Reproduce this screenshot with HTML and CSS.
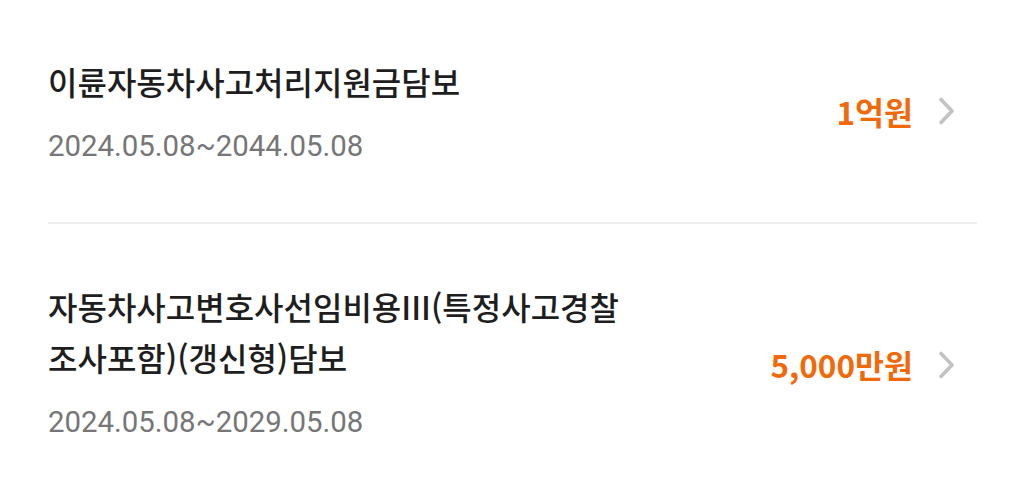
FILE: index.html
```html
<!DOCTYPE html>
<html lang="ko">
<head>
<meta charset="utf-8">
<link rel="stylesheet" href="styles.css">
</head>
<body>
<ul class="list">
  <li class="item">
    <div class="info">
      <div class="title">이륜자동차사고처리지원금담보</div>
      <div class="date">2024.05.08~2044.05.08</div>
    </div>
    <div class="amount">1억원</div>
    <svg class="chev" viewBox="0 0 24 30" width="24" height="30"><path d="M5 3.5 L16 15 L5 26.5" fill="none" stroke="#c2c2c2" stroke-width="3.6" stroke-linecap="round" stroke-linejoin="round"/></svg>
  </li>
  <li class="item">
    <div class="info">
      <div class="title">자동차사고변호사선임비용III(특정사고경찰조사포함)(갱신형)담보</div>
      <div class="date">2024.05.08~2029.05.08</div>
    </div>
    <div class="amount amount-low">5,000만원</div>
    <svg class="chev chev-low" viewBox="0 0 24 30" width="24" height="30"><path d="M5 3.5 L16 15 L5 26.5" fill="none" stroke="#c2c2c2" stroke-width="3.6" stroke-linecap="round" stroke-linejoin="round"/></svg>
  </li>
</ul>
</body>
</html>
```

FILE: styles.css
```css
html, body {
  margin: 0;
  padding: 0;
  background: #ffffff;
}
body {
  font-family: "Noto Sans CJK KR", sans-serif;
  color: #222222;
}
.list {
  list-style: none;
  margin: 0;
  padding: 0 48px;
}
.item {
  display: flex;
  align-items: center;
  padding: 56px 0;
  border-bottom: 2px solid #eeeeee;
}
.item:last-child {
  border-bottom: none;
  padding-top: 57px;
}
.info {
  flex: 1 1 auto;
  min-width: 0;
}
.title {
  font-size: 32px;
  font-weight: 500;
  line-height: 51px;
  max-width: 580px;
  color: #1e1e1e;
}
.date {
  margin-top: 19px;
  font-family: Roboto, "Noto Sans CJK KR", sans-serif;
  font-size: 29.4px;
  line-height: 40px;
  color: #767676;
}
.amount {
  font-size: 31.5px;
  font-weight: 700;
  color: #f06a0c;
  margin-right: 23px;
  white-space: nowrap;
}
.amount-low {
  position: relative;
  top: 2px;
}
.chev {
  flex: 0 0 auto;
  margin-right: 17px;
}
.chev-low {
  position: relative;
  top: 3px;
}
```
